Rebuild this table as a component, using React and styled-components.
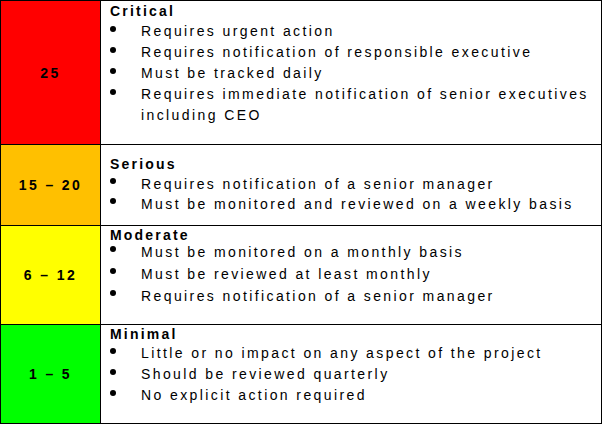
import React from "react";
import styled, { createGlobalStyle } from "styled-components";

const Global = createGlobalStyle`
  html, body { margin: 0; padding: 0; background: #fff; }
  body { font-family: "Liberation Sans", Arial, sans-serif; color: #000; }
`;

const Table = styled.div`
  width: 602px;
  box-sizing: border-box;
  border: 1px solid #000;
  display: flex;
  flex-direction: column;
`;

const Row = styled.div`
  display: grid;
  grid-template-columns: 100px 1fr;
  box-sizing: border-box;
  height: ${(p) => p.$h}px;
  & + & { border-top: 1px solid #000; }
`;

const Level = styled.div`
  background: ${(p) => p.$bg};
  border-right: 1px solid #000;
  display: flex;
  align-items: center;
  justify-content: center;
  font-weight: bold;
  font-size: 14px;
  letter-spacing: 2.4px;
  line-height: 16px;
`;

const Body = styled.div`
  padding: ${(p) => p.$pad}px 9px 0 9px;
  font-size: 14px;
  letter-spacing: 2.4px;
`;

const Title = styled.div`
  font-weight: bold;
  letter-spacing: 2.2px;
  line-height: ${(p) => p.$lh}px;
`;

const List = styled.ul`
  list-style: none;
  margin: 0;
  padding: 0;
`;

const Item = styled.li`
  display: grid;
  grid-template-columns: 31px 1fr;
  line-height: ${(p) => p.$lh}px;
`;

const Bullet = styled.span`
  display: block;
  width: 6px;
  height: 6px;
  border-radius: 50%;
  background: #000;
  margin-top: ${(p) => (p.$lh - 12) / 2}px;
`;

const rows = [
  {
    level: "25",
    bg: "#ff0000",
    h: 143,
    pad: 0,
    tlh: 20,
    lh: 21,
    title: "Critical",
    items: [
      "Requires urgent action",
      "Requires notification of responsible executive",
      "Must be tracked daily",
      "Requires immediate notification of senior executives including CEO",
    ],
  },
  {
    level: "15 – 20",
    bg: "#ffc000",
    h: 81,
    pad: 9,
    tlh: 20,
    lh: 20,
    title: "Serious",
    items: [
      "Requires notification of a senior manager",
      "Must be monitored and reviewed on a weekly basis",
    ],
  },
  {
    level: "6 – 12",
    bg: "#ffff00",
    h: 99,
    pad: 3,
    tlh: 12,
    lh: 22,
    title: "Moderate",
    items: [
      "Must be monitored on a monthly basis",
      "Must be reviewed at least monthly",
      "Requires notification of a senior manager",
    ],
  },
  {
    level: "1 – 5",
    bg: "#00ff00",
    h: 99,
    pad: 0,
    tlh: 18,
    lh: 21,
    title: "Minimal",
    items: [
      "Little or no impact on any aspect of the project",
      "Should be reviewed quarterly",
      "No explicit action required",
    ],
  },
];

export default function App() {
  return (
    <>
      <Global />
      <Table>
        {rows.map((r) => (
          <Row key={r.title} $h={r.h}>
            <Level $bg={r.bg}>{r.level}</Level>
            <Body $pad={r.pad}>
              <Title $lh={r.tlh}>{r.title}</Title>
              <List>
                {r.items.map((t) => (
                  <Item key={t} $lh={r.lh}>
                    <Bullet $lh={r.lh} />
                    <span>{t}</span>
                  </Item>
                ))}
              </List>
            </Body>
          </Row>
        ))}
      </Table>
    </>
  );
}
